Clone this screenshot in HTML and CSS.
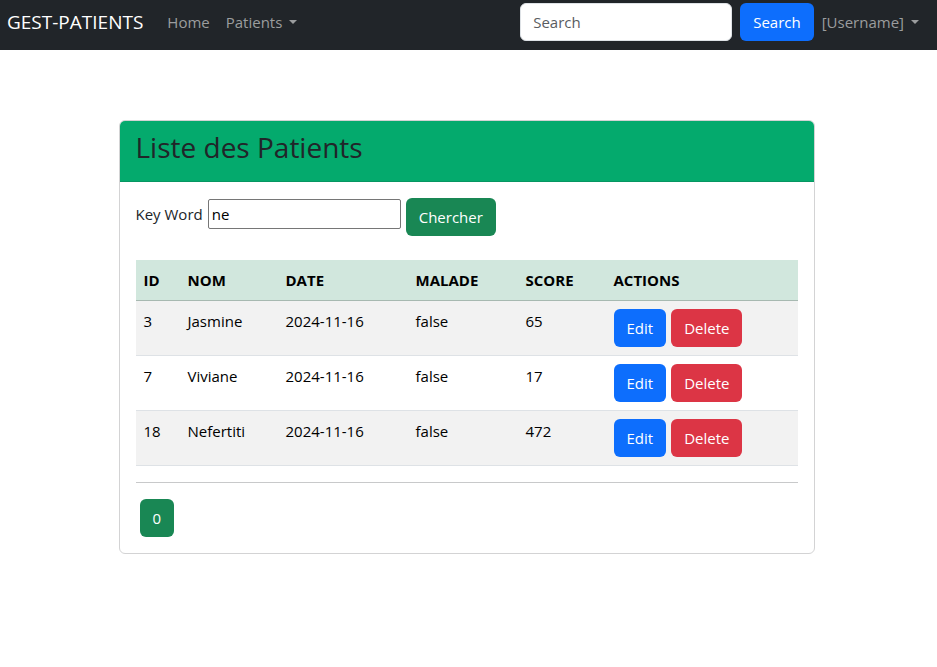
FILE: index.html
```html
<!DOCTYPE html>
<html lang="fr">
<head>
<meta charset="utf-8">
<meta name="viewport" content="width=device-width, initial-scale=1">
<title>Liste des Patients</title>
<link rel="stylesheet" href="styles.css">
</head>
<body>
<nav class="navbar">
  <a class="brand" href="#">GEST-PATIENTS</a>
  <a class="nav-link" href="#">Home</a>
  <a class="nav-link dropdown" href="#">Patients</a>
  <form class="nav-search">
    <input class="search-input" type="text" placeholder="Search" aria-label="Search">
    <button class="btn btn-primary" type="button">Search</button>
  </form>
  <a class="nav-link dropdown user" href="#">[Username]</a>
</nav>
<main class="page">
  <section class="card">
    <header class="card-header"><h1>Liste des Patients</h1></header>
    <div class="card-body">
      <form class="filter">
        <div class="field">
          <label for="keyword">Key Word</label>
          <input id="keyword" class="keyword" type="text" value="ne">
        </div>
        <button class="btn btn-success" type="button">Chercher</button>
      </form>
      <table class="table">
        <colgroup><col class="c-id"><col class="c-nom"><col class="c-date"><col class="c-malade"><col class="c-score"><col></colgroup>
        <thead>
          <tr><th>ID</th><th>NOM</th><th>DATE</th><th>MALADE</th><th>SCORE</th><th>ACTIONS</th></tr>
        </thead>
        <tbody>
          <tr><td>3</td><td>Jasmine</td><td>2024-11-16</td><td>false</td><td>65</td><td><div class="actions"><a class="btn btn-primary" href="#">Edit</a><a class="btn btn-danger" href="#">Delete</a></div></td></tr>
          <tr><td>7</td><td>Viviane</td><td>2024-11-16</td><td>false</td><td>17</td><td><div class="actions"><a class="btn btn-primary" href="#">Edit</a><a class="btn btn-danger" href="#">Delete</a></div></td></tr>
          <tr><td>18</td><td>Nefertiti</td><td>2024-11-16</td><td>false</td><td>472</td><td><div class="actions"><a class="btn btn-primary" href="#">Edit</a><a class="btn btn-danger" href="#">Delete</a></div></td></tr>
        </tbody>
      </table>
      <ul class="pages"><li><a class="btn btn-success" href="#">0</a></li></ul>
    </div>
  </section>
</main>
</body>
</html>
```
FILE: styles.css
```css
*, *::before, *::after { box-sizing: border-box; }

body {
  margin: 0;
  font-family: "Segoe UI", "Open Sans", "Noto Sans", sans-serif;
  font-size: 15px;
  line-height: 24px;
  color: #212529;
  background: #fff;
}

a { text-decoration: none; }

.navbar {
  display: flex;
  align-items: center;
  padding: 3px 18px 9px 7px;
  background: #212529;
}

.brand {
  margin-right: 16px;
  font-size: 19px;
  line-height: 38px;
  color: #fff;
}

.nav-link {
  display: flex;
  align-items: center;
  padding: 0 8px;
  line-height: 38px;
  color: #9b9d9e;
}

.dropdown::after {
  content: "";
  margin-left: 7px;
  border-top: 4px solid;
  border-right: 4px solid transparent;
  border-left: 4px solid transparent;
}

.user { padding-right: 0; }

.nav-search {
  display: flex;
  gap: 8px;
  margin-left: auto;
}

.search-input {
  width: 212px;
  height: 38px;
  padding: 6px 12px;
  border: 1px solid #dee2e6;
  border-radius: 6px;
  font: inherit;
  color: #212529;
  background: #fff;
}

.search-input::placeholder { color: #595c5f; opacity: 1; }

.btn {
  display: inline-block;
  padding: 6px 12px;
  border: 1px solid transparent;
  border-radius: 6px;
  font: inherit;
  color: #fff;
  cursor: pointer;
}

.btn-primary { background: #0d6efd; }
.btn-success { background: #198754; }
.btn-danger { background: #dc3545; }

.page {
  padding: 70px 16px 16px 12px;
}

.card {
  max-width: 696px;
  margin: 0 auto;
  border: 1px solid #d3d3d4;
  border-radius: 6px;
  overflow: hidden;
}

.card-header {
  padding: 8px 16px 16px;
  border-bottom: 1px solid #069662;
  background: #04aa6d;
}

.card-header h1 {
  margin: 0;
  font-size: 28px;
  font-weight: 400;
  line-height: 36px;
}

.card-body { padding: 16px; }

.filter {
  display: flex;
  align-items: flex-start;
  gap: 5px;
  margin-bottom: 24px;
}

.field {
  display: flex;
  align-items: center;
  gap: 5px;
  padding: 1px 0;
}

.keyword {
  width: 193px;
  height: 30px;
  padding: 1px 3px;
  border: 1px solid #767676;
  border-radius: 2px;
  font: inherit;
  color: #000;
}

.table {
  width: 100%;
  border-collapse: collapse;
  table-layout: fixed;
  color: #000;
}

.c-id { width: 44px; }
.c-nom { width: 98px; }
.c-date { width: 130px; }
.c-malade { width: 110px; }
.c-score { width: 88px; }

.table th, .table td {
  padding: 8px;
  text-align: left;
  vertical-align: top;
  border-bottom: 1px solid #dee2e6;
}

.table th {
  font-weight: 700;
  background: #d1e7dd;
  border-bottom-color: #a7b9b1;
}

.table tbody tr:nth-child(odd) { background: #f2f2f2; }

.actions { display: flex; gap: 5px; }

.pages {
  margin: 16px 0 0;
  padding: 16px 4px 0;
  border-top: 1px solid #c8c9ca;
  list-style: none;
  display: flex;
}
```
